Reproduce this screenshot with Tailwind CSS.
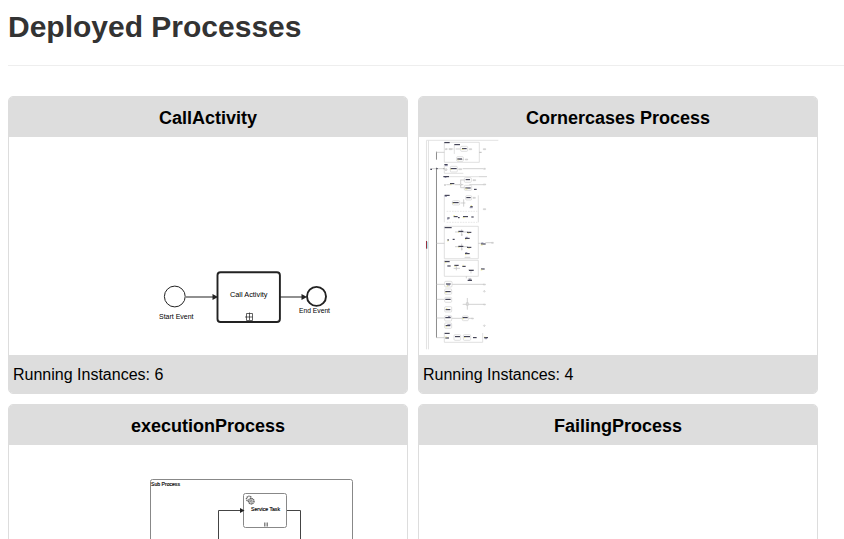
<!DOCTYPE html>
<html lang="en">
<head>
<meta charset="utf-8">
<title>Deployed Processes</title>
<script src="https://cdn.jsdelivr.net/npm/@tailwindcss/browser@4"></script>
</head>
<body class="h-[539px] overflow-hidden bg-white pl-2 font-['Liberation_Sans',Arial,sans-serif] text-black">
<h1 class="h-[66px] border-b border-[#eee] pt-[7px] text-[30px] leading-[40px] font-bold text-[#333]">Deployed Processes</h1>
<main class="mt-[30px] grid h-[443px] grid-cols-[400px_400px] grid-rows-[298px_298px] gap-[10px] overflow-hidden">

<section class="overflow-hidden rounded-[5px] border border-[#ddd]">
<h2 class="h-10 bg-[#ddd] pt-px text-center text-lg leading-10 font-bold">CallActivity</h2>
<svg class="block h-[218px] w-[398px]" viewBox="9 137 398 218" fill="none" stroke="#222" font-size="7">
<circle cx="174.8" cy="296.5" r="10.4" stroke-width="1"/>
<path d="M186 297H213M280 297H302" stroke-width="1.2"/>
<path d="M212.500 294V300L218 297ZM301.500 294V300L307 297Z" fill="#222" stroke="none"/>
<rect x="217.500" y="272.300" width="62.400" height="49.700" rx="3" stroke-width="1.9"/>
<circle cx="316.500" cy="296.400" r="9.500" stroke-width="1.9"/>
<path d="M246.500 313.500H252.500V320.500H246.500ZM249.500 312.500V320M245 317H252.500" stroke-width=".7"/>
<g fill="#000" stroke="none">
<text x="230" y="297" textLength="37.500" lengthAdjust="spacingAndGlyphs">Call Activity</text>
<text x="159" y="319" textLength="34.500" lengthAdjust="spacingAndGlyphs">Start Event</text>
<text x="299" y="313" textLength="31" lengthAdjust="spacingAndGlyphs">End Event</text>
</g>
</svg>
<p class="h-[39px] bg-[#ddd] px-1 text-base leading-[39px]">Running Instances: 6</p>
</section>

<section class="overflow-hidden rounded-[5px] border border-[#ddd]">
<h2 class="h-10 bg-[#ddd] pt-px text-center text-lg leading-10 font-bold">Cornercases Process</h2>
<svg class="block h-[218px] w-[398px]" viewBox="419 137 398 218" fill="none">
<g transform="translate(418 136) scale(.33333)" stroke-width="2">
<!-- pool and lane borders -->
<path d="M241 13H25.500V640M31.500 13V640" stroke="#ddd" stroke-width="2.500"/>
<!-- sub processes -->
<g stroke="#d2d2d2">
<path d="M79 19H184V79H79ZM109 26V54M79 87V112H136M79 122H180M79 178V259M181 178V259"/>
<path d="M86 226H178M86 259H178" stroke-dasharray="5 3" stroke="#ddd"/>
<path d="M79 271H181V368H79ZM79 373H181V421H79ZM79 590V619H194V591"/>
</g>
<!-- trunk and branches -->
<path d="M55.500 47V71M55.500 95V605" stroke="#858585" stroke-width="2.800"/>
<g stroke="#bbb">
<path d="M55 49H79M37 98H79M55 322H79M55 445H79M55 490H79M55 546H79M55 605H79"/>
<path d="M134 98H196M181 122H207M154 146H196M181 322H190M202 320H224M102 445H198M134 505H198M102 547H132M152 547H162M148 486V521M85 146H100M110 146H136M128 131V155M128 132H140M128 155H140M137 190V212M128 201H142M119 70H138M84 39H89M92 39H106M113 39H127"/>
<path d="M111 288H150M131 280V300M111 332H150M131 323V343M115 390V403M107 397H126M150 402H168M159 403V412M140 364H157M145 421V427M151 430H162"/>
</g>
<path d="M75 98H80M184 49H191" stroke="#999"/>
<!-- tasks -->
<g stroke="#d0d0d0">
<rect x="128" y="31" width="21" height="15" rx="3"/><rect x="116" y="62" width="20" height="14" rx="3"/>
<rect x="97" y="91" width="21" height="17" rx="3"/><rect x="139" y="125" width="21" height="14" rx="3"/>
<rect x="139" y="148" width="22" height="15" rx="3"/><rect x="143" y="179" width="18" height="13" rx="3"/>
<rect x="103" y="194" width="22" height="13" rx="3"/><rect x="80" y="436" width="22" height="17" rx="3"/>
<rect x="80" y="459" width="21" height="16" rx="3"/><rect x="80" y="484" width="21" height="15" rx="3"/>
<rect x="80" y="512" width="21" height="16" rx="3"/><rect x="80" y="539" width="21" height="16" rx="3"/>
<rect x="133" y="540" width="18" height="14" rx="3"/><rect x="80" y="561" width="21" height="16" rx="3"/>
<rect x="108" y="596" width="20" height="17" rx="3"/><rect x="136" y="596" width="22" height="17" rx="3"/>
</g>
<!-- events and gateways -->
<g stroke="#c4c4c4" stroke-width="1.500" fill="#ddd">
<path d="M82 38H86V41H82ZM94 38H101V41H94ZM154 38H161V41H154ZM196 38H203V41H196ZM142 69H149V72H142ZM122 98H131V101H122ZM197 97H202V100H197ZM81 144L84 147L81 150L78 147ZM125 146L128 143L131 146L128 149ZM165 131H173V134H165ZM196 144H203V147H196ZM165 184H172V187H165ZM196 218H203V221H196ZM221 319H226V322H221ZM130 295H133V298H130ZM130 338H133V341H130ZM196 444H202V447H196ZM199 463L202 466L199 469L196 466ZM197 504H202V507H197ZM161 546H166V549H161ZM199 566L202 569L199 572L196 569ZM152 427H159V430H152ZM84 97L88 101L84 105L80 101Z"/>
<path d="M145 500H151V508H145Z"/>
</g>
<!-- captions reduced to strokes -->
<g stroke="#222238" stroke-width="3">
<path d="M79 20H95M109 26H126M132 38H146M118 69H132M79 86H89M98 98H116M37 100H42M55 98H59M76 122H93M96 143H109M143 131H156M142 156H158M168 160H176M80 178H95M145 185H158M104 200H122M157 212H164"/>
<path d="M88 246H95M107 242H119M120 245H125M135 242H150M160 243H167M80 275H101M121 286H136M147 289H160M141 307H155M88 312H93M104 310H110M121 331H136M147 334H160M141 353H155M189 324H203M80 377H95M88 390H98M109 388H122M133 391H143M153 403H167M189 399H200M149 433H162"/>
<path d="M84 444H98M82 467H98M82 490H98M83 521H97M82 545H98M134 545H149M83 569H97M80 592H95M82 606H93M111 602H126M138 602H156M165 605H176M198 605H210"/>
</g>
<g stroke="#565680" stroke-width="2">
<path d="M81 89H89M80 124H85M155 215H164M190 321H196M87 447H96M88 566H98M80 181H87M87 249H92M143 304H149M142 350H148M153 430H158M90 542H97M200 608H207"/>
</g>
<g stroke="#e5df68" stroke-width="2">
<path d="M131 40H137M119 72H122M97 100H101M97 146H101M142 159H148M104 202H108M158 209H162M106 239H111M134 245H140M120 289H123M149 292H154M141 311H145M88 315H91M121 334H124M151 337H155M141 356H145M188 327H194M81 380H85M109 391H113M134 388H137M188 402H193M86 450H91M82 470H86M84 518H88M134 548H138M83 572H87M82 603H86M138 605H142M199 603H202"/>
</g>
<path d="M25.500 315V338" stroke="#982c3a" stroke-width="3"/><path d="M28.500 317V338" stroke="#8bdde7"/>
</g>
</svg>
<p class="h-[39px] bg-[#ddd] px-1 text-base leading-[39px]">Running Instances: 4</p>
</section>

<section class="overflow-hidden rounded-[5px] border border-[#ddd]">
<h2 class="h-10 bg-[#ddd] pt-px text-center text-lg leading-10 font-bold">executionProcess</h2>
<svg class="block h-[218px] w-[398px]" viewBox="9 445 398 218" fill="none">
<rect x="150.500" y="479.500" width="202" height="170" rx="2" stroke="#888"/>
<rect x="243.500" y="493.500" width="43" height="34" rx="2" stroke="#888"/>
<path d="M218.500 560V510.500H241M287 510.500H300.500V560" stroke="#444"/>
<path d="M240 508V513L244.500 510.500Z" fill="#222"/>
<g stroke="#666"><circle cx="249" cy="498.800" r="2.500" stroke-width="1.500" stroke-dasharray="1.300 .5"/><circle cx="251.300" cy="501.200" r="2.700" fill="#ddd" stroke-width="1.500" stroke-dasharray="1.300 .5"/><circle cx="251.300" cy="501.200" r=".9" stroke-width=".7"/></g>
<path d="M264.500 522.500V526.500M266 522.500V526.500M267.500 522.500V526.500" stroke="#666" stroke-width=".8"/>
<g fill="#000" stroke="#000" stroke-width=".15" font-size="5">
<text x="151" y="486" textLength="29" lengthAdjust="spacingAndGlyphs">Sub Process</text>
<text x="251" y="511" textLength="29" lengthAdjust="spacingAndGlyphs">Service Task</text>
</g>
</svg>
</section>

<section class="overflow-hidden rounded-[5px] border border-[#ddd]">
<h2 class="h-10 bg-[#ddd] pt-px text-center text-lg leading-10 font-bold">FailingProcess</h2>
</section>
</main>
</body>
</html>
